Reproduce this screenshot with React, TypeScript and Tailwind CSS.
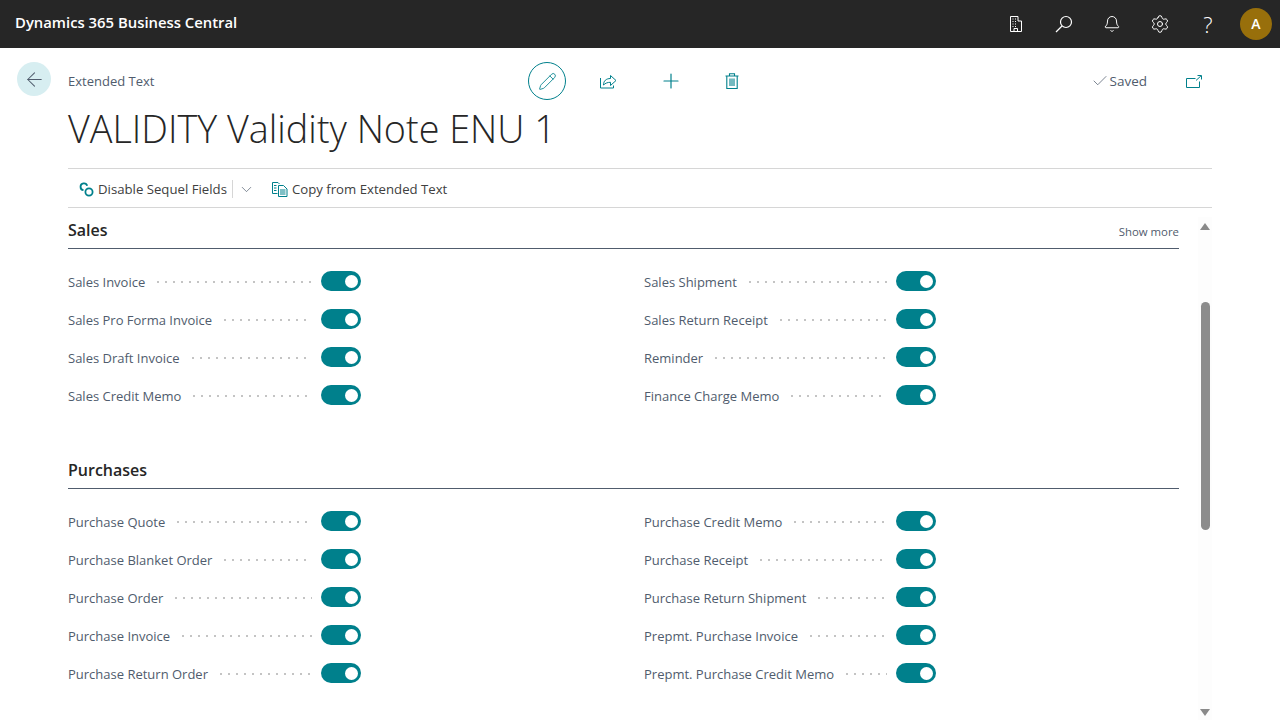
import React from 'react';
import { ArrowLeft, Bell, Check, ChevronDown, Pencil, Plus, Settings } from 'lucide-react';

const sales = [
  ['Sales Invoice', 'Sales Shipment'],
  ['Sales Pro Forma Invoice', 'Sales Return Receipt'],
  ['Sales Draft Invoice', 'Reminder'],
  ['Sales Credit Memo', 'Finance Charge Memo'],
];

const purchases = [
  ['Purchase Quote', 'Purchase Credit Memo'],
  ['Purchase Blanket Order', 'Purchase Receipt'],
  ['Purchase Order', 'Purchase Return Shipment'],
  ['Purchase Invoice', 'Prepmt. Purchase Invoice'],
  ['Purchase Return Order', 'Prepmt. Purchase Credit Memo'],
];

const BuildingIcon = () => (
  <svg width="14" height="16" viewBox="0 0 14 16" fill="none" stroke="white" strokeWidth="1">
    <path d="M1.5 15.5V.5h7.500v4.500h3.500v10.500z" />
    <path d="M5 15.500v-3h3.500v3" />
    <path d="M3.500 3h1M6 3h1M3.500 5.500h1M6 5.500h1M3.500 8h1M6 8h1M3.500 10.500h1M6 10.500h1" strokeDasharray="1 0.500" />
  </svg>
);

const SearchIcon = () => (
  <svg width="18" height="18" viewBox="0 0 18 18" fill="none" stroke="white" strokeWidth="1.200">
    <circle cx="11" cy="7" r="5.500" />
    <path d="M7 11L1 17" />
  </svg>
);

const ShareIcon = () => (
  <svg width="17" height="15" viewBox="0 0 17 15" fill="none" stroke="#00808c" strokeWidth="1">
    <path d="M.5 4v10h13v-2.500" />
    <path d="M3.500 11c0-4 2.500-6.500 7-6.500V1.500l5.500 5-5.500 5V8.300c-3 0-5 .8-7 2.700z" />
  </svg>
);

const TrashIcon = () => (
  <svg width="14" height="16" viewBox="0 0 14 16" fill="none" stroke="#00808c" strokeWidth="1.100">
    <path d="M.5 3h13M4.500 3V.8h5V3M1.800 3v12.500h10.400V3" />
    <path d="M5 5.500v7.500M7 5.500v7.500M9 5.500v7.500" />
  </svg>
);

const OpenIcon = () => (
  <svg width="16" height="13" viewBox="0 0 16 13" fill="none" stroke="#00808c" strokeWidth="1">
    <path d="M13.500 6.500v6H.5v-9h9" />
    <path d="M10 5.500L15 .8M11.500.5h4v4" />
  </svg>
);

const LinkIcon = () => (
  <svg width="15" height="15" viewBox="0 0 15 15" fill="none" stroke="#00808c" strokeWidth="1.800">
    <circle cx="10" cy="10" r="3.600" />
    <path d="M4.500 8.200A3.400 3.400 0 1 1 8.200 3.800" />
  </svg>
);

const CopyIcon = () => (
  <svg width="16" height="15" viewBox="0 0 16 15" fill="none" stroke="#00808c" strokeWidth="1">
    <path d="M5.500 11.500H.5V.5h5.500L7.500 2" />
    <path d="M6.500 3.500h5l3.500 3.500v7.500H6.500z" />
    <path d="M8 8h5.500M8 10h5.500M8 12h5.500M2 3.500h2.500M2 6h2.500M2 8.500h2.500" />
  </svg>
);

const Toggle = () => (
  <div className="flex h-5 w-10 shrink-0 items-center justify-end rounded-full bg-[#00808c] pr-[3px]">
    <div className="h-[13px] w-[13px] rounded-full bg-white" />
  </div>
);

const Field = ({ label }: { label: string }) => (
  <div className="flex h-[38px] items-center">
    <span className="shrink-0 whitespace-nowrap pt-1 text-[13px] text-[#505c6d]">{label}</span>
    <div className="mx-[9px] mt-0.5 h-0.5 flex-1 bg-[radial-gradient(circle,#c4c4c4_1px,transparent_1px)] bg-[length:8px_2px]" />
    <Toggle />
  </div>
);

const Section = ({ title, rows, more }: { title: string; rows: string[][]; more?: boolean }) => (
  <section>
    <div className="flex h-[41px] items-end justify-between border-b border-[#505c6d] pb-[6px]">
      <h2 className="text-base leading-6 font-semibold text-[#262626]">{title}</h2>
      {more && <span className="text-[11.400px] leading-5 text-[#505c6d]">Show more</span>}
    </div>
    <div className="pt-[13px]">
      {rows.map((row) => (
        <div key={row[0]} className="grid grid-cols-[293px_292px] gap-x-[283px]">
          <Field label={row[0]} />
          <Field label={row[1]} />
        </div>
      ))}
    </div>
  </section>
);

const App: React.FC = () => {
  return (
    <div className="relative h-[720px] w-[1280px] overflow-hidden bg-white font-['Open_Sans','Noto_Sans',sans-serif]">
      <header className="flex h-12 items-center justify-between bg-[#262626] pr-2 pl-[15px]">
        <span className="mb-1 text-[14.850px] font-semibold text-white">Dynamics 365 Business Central</span>
        <div className="flex items-center">
          <div className="flex w-12 justify-center"><BuildingIcon /></div>
          <div className="flex w-12 justify-center"><SearchIcon /></div>
          <div className="flex w-12 justify-center"><Bell size={18} color="white" strokeWidth={1.300} /></div>
          <div className="flex w-12 justify-center"><Settings size={20} color="white" strokeWidth={1.200} /></div>
          <div className="flex w-12 justify-center text-[22px] leading-6 font-light text-white">?</div>
          <div className="ml-2 flex h-8 w-8 items-center justify-center rounded-full bg-[#986f0b] text-sm font-semibold text-white">A</div>
        </div>
      </header>

      <div className="flex h-[120px]">
        <div className="w-[68px] shrink-0 pt-[14px] pl-[17px]">
          <div className="flex h-[34px] w-[34px] items-center justify-center rounded-full bg-[#d7eef1]">
            <ArrowLeft size={23} color="#505c6d" strokeWidth={1.100} />
          </div>
        </div>
        <div className="flex min-w-0 flex-1 flex-col pr-[68px]">
          <div className="flex h-[66px] items-center">
            <span className="w-[460px] pt-[2px] text-[13px] text-[#505c6d]">Extended Text</span>
            <div className="flex items-center">
              <div className="flex h-[38px] w-[38px] items-center justify-center rounded-full border border-[#00808c]">
                <Pencil size={19} color="#00808c" strokeWidth={1.100} />
              </div>
              <div className="ml-[34px]"><ShareIcon /></div>
              <div className="ml-[42px]"><Plus size={24} color="#00808c" strokeWidth={1.200} /></div>
              <div className="ml-[42px]"><TrashIcon /></div>
            </div>
            <div className="ml-auto flex items-center">
              <Check size={18} color="#505c6d" strokeWidth={1} />
              <span className="ml-px text-[13.500px] text-[#505c6d]">Saved</span>
              <div className="mr-[10px] ml-[39px]"><OpenIcon /></div>
            </div>
          </div>
          <h1 className="-mt-px text-[37.750px] leading-[32px] font-light text-[#262626]">VALIDITY Validity Note ENU 1</h1>
        </div>
      </div>

      <div className="mx-[68px] flex h-10 items-center border-y border-[#d6d6d6] pt-[2px] pl-[11px] text-[13.200px] text-[#404040]">
        <LinkIcon />
        <span className="mt-[2px] ml-[4px]">Disable Sequel Fields</span>
        <div className="ml-[5px] h-[18px] w-px bg-[#d6d6d6]" />
        <ChevronDown size={17} color="#505c6d" strokeWidth={1} className="ml-[5px]" />
        <div className="ml-[17px]"><CopyIcon /></div>
        <span className="mt-[2px] ml-[4px]">Copy from Extended Text</span>
      </div>

      <main className="flex w-[1179px] flex-col pl-[68px]">
        <Section title="Sales" rows={sales} more />
        <div className="h-[34px]" />
        <Section title="Purchases" rows={purchases} />
      </main>

      <div className="absolute top-[217px] left-[1198px] flex h-[503px] w-[14px] flex-col items-center bg-[#fdfdfd]">
        <div className="mt-[6px] h-0 w-0 border-x-[5px] border-b-[7px] border-x-transparent border-b-[#8a8a8a]" />
        <div className="mt-[72px] h-[228px] w-[9px] rounded-full bg-[#8c8c8c]" />
        <div className="mt-[179px] h-0 w-0 border-x-[5px] border-t-[7px] border-x-transparent border-t-[#8a8a8a]" />
      </div>
    </div>
  );
};

export default App;
